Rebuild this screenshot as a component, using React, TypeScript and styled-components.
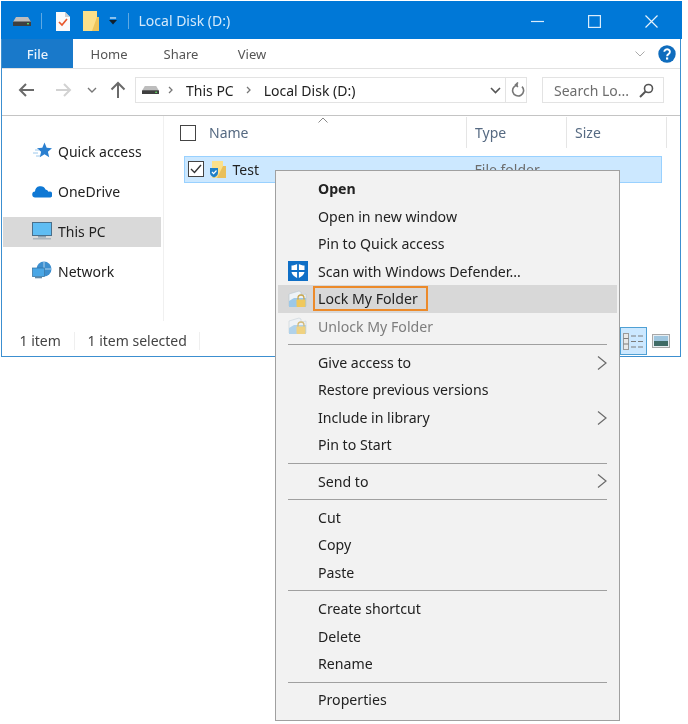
import React from "react";
import styled, { createGlobalStyle } from "styled-components";

const Global = createGlobalStyle`
  html, body { margin: 0; padding: 0; background: #fff; }
  body { font-family: "Noto Sans", "Open Sans", sans-serif; color: #1a1a1a; }
  * { box-sizing: border-box; }
`;

const Page = styled.div`
  position: relative;
  width: 688px;
  height: 724px;
  padding: 1px 0 0 1px;
  background: #fff;
  overflow: hidden;
  filter: blur(0.3px);
`;

const Window = styled.div`
  width: 680px;
  height: 356px;
  border: solid #3c8fd0;
  border-width: 0 1.5px 1.5px 1.5px;
  display: flex;
  flex-direction: column;
  background: #fff;
`;

const TitleBar = styled.div`
  flex: 0 0 38px;
  margin: 0 -1.5px;
  background: #0078d7;
  display: flex;
  align-items: center;
  padding: 2px 0 0 12px;
  color: #d4e9fa;
  font-size: 14px;
`;

const TitleSep = styled.span<{ $ml: number; $mr: number }>`
  width: 1px;
  height: 16px;
  background: #5ea9e3;
  margin: 0 ${(p) => p.$mr}px 0 ${(p) => p.$ml}px;
`;

const TitleText = styled.span`
  flex: 1;
  margin-top: -1px;
`;

const WinControls = styled.div`
  display: flex;
  align-items: center;
  gap: 44px;
  padding-right: 24px;
`;

const TabsRow = styled.div`
  flex: 0 0 30px;
  display: flex;
  align-items: stretch;
  border-bottom: 1px solid #e2e2e2;
  font-size: 13px;
  color: #555;
`;

const FileTab = styled.div`
  width: 71px;
  background: #1979ca;
  color: #e8f2fb;
  font-weight: 500;
  display: flex;
  align-items: center;
  justify-content: center;
`;

const Tab = styled.div<{ $w: number }>`
  width: ${(p) => p.$w}px;
  display: flex;
  align-items: center;
  justify-content: center;
`;

const TabsEnd = styled.div`
  margin-left: auto;
  display: flex;
  align-items: center;
  gap: 13px;
  padding-right: 4px;
`;

const AddressRow = styled.div`
  flex: 0 0 47px;
  display: flex;
  align-items: center;
  border-bottom: 1.5px solid #c4c4c4;
  padding: 0 0 4px 16px;
`;

const NavIcons = styled.div`
  display: flex;
  align-items: center;
  width: 117px;
`;

const AddressBox = styled.div`
  width: 392px;
  height: 26px;
  border: 1px solid #e3e3e3;
  display: flex;
  align-items: center;
  padding-left: 6px;
  font-size: 14px;
  color: #222;
`;

const Crumb = styled.span`
  margin: 0 12px 0 12px;
`;

const AddressEnd = styled.div`
  margin-left: auto;
  display: flex;
  align-items: center;
  height: 100%;
  gap: 4px;
  padding-right: 1px;
`;

const AddressDivider = styled.span`
  width: 1px;
  height: 100%;
  background: #e3e3e3;
  margin: 0 1px 0 0;
`;

const SearchBox = styled.div`
  width: 122px;
  height: 26px;
  border: 1px solid #e3e3e3;
  margin-left: 15px;
  display: flex;
  align-items: center;
  justify-content: space-between;
  padding: 0 9px 0 11px;
  font-size: 14px;
  color: #6d6d6d;
`;

const Body = styled.div`
  flex: 1;
  display: flex;
  min-height: 0;
`;

const Sidebar = styled.div`
  width: 162px;
  padding: 21px 0 0 1px;
  display: flex;
  flex-direction: column;
  gap: 10px;
  border-right: 1px solid #f0f0f0;
  margin-bottom: 5px;
`;

const NavItem = styled.div<{ $selected?: boolean }>`
  width: 158px;
  height: 30px;
  padding: 0 0 2px 29px;
  display: flex;
  align-items: center;
  gap: 6px;
  font-size: 14px;
  color: #222;
  background: ${(p) => (p.$selected ? "#d9d9d9" : "transparent")};
`;

const Files = styled.div`
  flex: 1;
  padding: 1px 0 0 16px;
`;

const HeaderRow = styled.div`
  position: relative;
  height: 31px;
  display: flex;
  align-items: center;
  font-size: 14px;
  color: #566a82;
`;

const SortCaret = styled.svg`
  position: absolute;
  left: 138px;
  top: 0;
`;

const Column = styled.div<{ $w: number; $pl: number; $line?: boolean }>`
  width: ${(p) => p.$w}px;
  height: 100%;
  padding-left: ${(p) => p.$pl}px;
  display: flex;
  align-items: center;
  gap: 13px;
  border-right: ${(p) => (p.$line ? "1px solid #e5e5e5" : "none")};
`;

const CheckBox = styled.span`
  width: 16px;
  height: 16px;
  border: 1.5px solid #444;
  background: #fff;
  display: inline-flex;
  align-items: center;
  justify-content: center;
  flex: none;
`;

const FileRow = styled.div`
  width: 478px;
  height: 27px;
  margin: 8px 0 0 3.5px;
  background: #cce8ff;
  border: 1px solid #99d1ff;
  display: flex;
  align-items: center;
  padding: 0 0 1px 3px;
  font-size: 14px;
  color: #222;
`;

const FileName = styled.span`
  width: 242px;
  margin-left: 7px;
`;

const FileType = styled.span`
  color: #6d6d6d;
`;

const StatusBar = styled.div`
  flex: 0 0 30px;
  display: flex;
  align-items: center;
  font-size: 14px;
  color: #444;
  padding-left: 17.5px;
`;

const StatusText = styled.span<{ $w: number }>`
  width: ${(p) => p.$w}px;
  height: 18px;
  line-height: 18px;
  border-right: 1px solid #efefef;
`;

const StatusItem = styled(StatusText)`
  margin-left: 13px;
`;

const ViewButtons = styled.div`
  margin-left: auto;
  display: flex;
  align-items: center;
  gap: 5px;
  padding-right: 10px;
  height: 100%;
`;

const DetailsButton = styled.div`
  width: 27px;
  height: 28px;
  background: #cce8ff;
  border: 1px solid #4fa0d4;
  display: flex;
  align-items: center;
  justify-content: center;
`;

const Menu = styled.div`
  position: absolute;
  left: 275px;
  top: 170px;
  width: 345px;
  height: 551px;
  background: #f2f2f2;
  border: 1px solid #a0a0a0;
  padding: 4.25px 2px 0 2px;
  font-size: 14.15px;
  color: #222;
`;

const MenuRow = styled.div<{ $active?: boolean; $disabled?: boolean; $bold?: boolean }>`
  height: 27.5px;
  display: flex;
  align-items: center;
  padding: 0 0 1px 40px;
  position: relative;
  background: ${(p) => (p.$active ? "#d8d8d8" : "transparent")};
  color: ${(p) => (p.$disabled ? "#7d7d7d" : "#222")};
  font-weight: ${(p) => (p.$bold ? 700 : 400)};
`;

const MenuIcon = styled.svg`
  position: absolute;
  left: 10px;
  top: 3.5px;
`;

const MenuArrow = styled.svg`
  position: absolute;
  right: 10px;
  top: 6.5px;
`;

const Highlight = styled.span`
  position: absolute;
  left: 35px;
  top: 1px;
  width: 115px;
  height: 25px;
  border: 2.5px solid #ec8a2a;
`;

const Separator = styled.div`
  height: 1px;
  margin: 3.9px 10px;
  background: #a0a0a0;
`;

const Drive = ({ w = 18 }: { w?: number }) => (
  <svg width={w} height={(w * 9) / 18} viewBox="0 0 18 9">
    <path d="M3 0h12l3 5H0z" fill="#bdbdbd" />
    <rect x="0" y="4.5" width="18" height="4.5" rx="0.6" fill="#3f3f3f" />
    <rect x="14" y="6" width="2" height="1.4" fill="#5fd35f" />
  </svg>
);

const LockFolder = ({ dim }: { dim?: boolean }) => (
  <MenuIcon width="20" height="20" viewBox="0 0 20 20" opacity={dim ? 0.75 : 1}>
    <path d="M1 5l10-3 2 1v3l5-1v12H1z" fill="#eef3f7" stroke="#b9c6cf" strokeWidth="0.6" />
    <path d="M1 12l5-3h12v9H1z" fill="#9cc8e8" />
    <path d="M10 11V9a3 3 0 0 1 6 0v2" fill="none" stroke="#c9a74e" strokeWidth="1.3" />
    <rect x="8.5" y="10.5" width="9" height="7.5" rx="0.8" fill="#f0c85c" />
  </MenuIcon>
);

const Arrow = ({ d, color }: { d: string; color: string }) => (
  <svg width="18" height="16" viewBox="0 0 18 16" fill="none" stroke={color} strokeWidth="2">
    <path d={d} />
  </svg>
);

const Chevron = () => (
  <MenuArrow width="10" height="14" viewBox="0 0 10 14" fill="none" stroke="#6a6a6a" strokeWidth="1.2">
    <path d="M1 0.5L9 7 1 13.5" />
  </MenuArrow>
);

type Item = { label: string; bold?: boolean; sub?: boolean };
const Group = ({ items }: { items: Item[] }) => (
  <>
    {items.map((i) => (
      <MenuRow key={i.label} $bold={i.bold}>
        {i.label}
        {i.sub && <Chevron />}
      </MenuRow>
    ))}
  </>
);

export default function App() {
  return (
    <Page>
      <Global />
      <Window>
        <TitleBar>
          <Drive />
          <TitleSep $ml={10} $mr={14} />
          <svg width="14" height="19" viewBox="0 0 14 19">
            <path d="M0 0h9l5 5v14H0z" fill="#fafafa" />
            <path d="M9 0l5 5H9z" fill="#cfcfcf" />
            <path d="M3 10l3 3 5-6" fill="none" stroke="#e8562a" strokeWidth="1.7" />
          </svg>
          <svg width="16" height="20" viewBox="0 0 16 20" style={{ marginLeft: 13 }}>
            <rect width="14" height="20" fill="#fbe08a" />
            <path d="M14 6h2v14H9z" fill="#eec45a" />
          </svg>
          <svg width="8" height="8" viewBox="0 0 9 8" style={{ marginLeft: 10 }}>
            <rect x="1" y="0" width="7" height="1.2" fill="#fff" />
            <path d="M0 3h9L4.500 8z" fill="#10202e" />
          </svg>
          <TitleSep $ml={11} $mr={10} />
          <TitleText>Local Disk (D:)</TitleText>
          <WinControls>
            <svg width="13" height="13" viewBox="0 0 13 13" stroke="#d9ecfb" strokeWidth="1.2">
              <path d="M0 6.500h13" />
            </svg>
            <svg width="13" height="13" viewBox="0 0 13 13" fill="none" stroke="#d9ecfb" strokeWidth="1.2">
              <rect x="0.600" y="0.600" width="11.800" height="11.800" />
            </svg>
            <svg width="13" height="13" viewBox="0 0 13 13" fill="none" stroke="#e6f2fc" strokeWidth="1.2">
              <path d="M0.500 0.500l12 12M12.500 0.500l-12 12" />
            </svg>
          </WinControls>
        </TitleBar>
        <TabsRow>
          <FileTab>File</FileTab>
          <Tab $w={72}>Home</Tab>
          <Tab $w={72}>Share</Tab>
          <Tab $w={70}>View</Tab>
          <TabsEnd>
            <svg width="10" height="6" viewBox="0 0 10 6" fill="none" stroke="#aaa" strokeWidth="1">
              <path d="M0.500 0.500L5 5l4.500-4.500" />
            </svg>
            <svg width="18" height="18" viewBox="0 0 18 18">
              <circle cx="9" cy="9" r="8.700" fill="#0f6cbd" />
              <path d="M6.300 6.800a2.800 2.600 0 1 1 4.200 2.300c-1 .6-1.400 1-1.400 2.200" fill="none" stroke="#fff" strokeWidth="1.900" />
              <rect x="8" y="12.400" width="2.200" height="2.200" fill="#fff" />
            </svg>
          </TabsEnd>
        </TabsRow>
        <AddressRow>
          <NavIcons>
            <Arrow d="M16 8H2M8 2L2 8l6 6" color="#6a6a6a" />
            <span style={{ width: 19 }} />
            <Arrow d="M1 8h14M9 2l6 6-6 6" color="#d2d2d2" />
            <svg width="10" height="6" viewBox="0 0 10 6" fill="none" stroke="#777" strokeWidth="1.400" style={{ marginLeft: 14 }}>
              <path d="M1 1l4 4 4-4" />
            </svg>
            <svg width="16" height="18" viewBox="0 0 16 18" fill="none" stroke="#6a6a6a" strokeWidth="2" style={{ marginLeft: 13 }}>
              <path d="M8 17V2M1.500 8.500L8 2l6.500 6.500" />
            </svg>
          </NavIcons>
          <AddressBox>
            <Drive w={17} />
            <svg width="6" height="8" viewBox="0 0 6 8" fill="none" stroke="#777" strokeWidth="1.300" style={{ marginLeft: 9 }}>
              <path d="M1 1l3 3-3 3" />
            </svg>
            <Crumb>This PC</Crumb>
            <svg width="6" height="8" viewBox="0 0 6 8" fill="none" stroke="#777" strokeWidth="1.300">
              <path d="M1 1l3 3-3 3" />
            </svg>
            <Crumb>Local Disk (D:)</Crumb>
            <AddressEnd>
              <svg width="11" height="7" viewBox="0 0 11 7" fill="none" stroke="#555" strokeWidth="1.600">
                <path d="M1 1l4.500 4.500L10 1" />
              </svg>
              <AddressDivider />
              <svg width="14" height="16" viewBox="0 0 14 16" fill="none" stroke="#777" strokeWidth="1.600">
                <path d="M11 4.600A5.500 5.500 0 1 1 7 3H4.500M7 0.500L4.500 3 7 5" />
              </svg>
            </AddressEnd>
          </AddressBox>
          <SearchBox>
            Search Lo...
            <svg width="15" height="15" viewBox="0 0 15 15" fill="none" stroke="#555" strokeWidth="1.600">
              <circle cx="9.500" cy="5.500" r="4" />
              <path d="M6.500 8.500L1 14" strokeWidth="2" />
            </svg>
          </SearchBox>
        </AddressRow>
        <Body>
          <Sidebar>
            <NavItem>
              <svg width="20" height="18" viewBox="0 0 20 18">
                <path d="M12.500 0.500l2.200 5.300 5.300.4-4.100 3.500 1.300 5.600-4.700-3-4.700 3 1.300-5.600-4.100-3.500 5.300-.4z" fill="#2a7fd0" />
                <path d="M1 11h5M3 8h4M4 14h4" stroke="#9cc8ec" strokeWidth="1" />
              </svg>
              Quick access
            </NavItem>
            <NavItem>
              <svg width="20" height="14" viewBox="0 0 20 14">
                <path d="M3.500 13.500a3 3 0 0 1-.5-6 5.500 5.500 0 0 1 10.500-2 4 4 0 0 1 3 2.300 3 3 0 0 1 2 5.700z" fill="#0f78d4" />
              </svg>
              OneDrive
            </NavItem>
            <NavItem $selected>
              <svg width="20" height="18" viewBox="0 0 20 18">
                <rect x="0.500" y="0.500" width="19" height="13" fill="#5fbdf3" stroke="#4a6f8a" />
                <rect x="6" y="14" width="8" height="1.500" fill="#8aa0b0" />
                <rect x="1" y="16" width="18" height="1.500" fill="#a9b4bc" />
              </svg>
              This PC
            </NavItem>
            <NavItem>
              <svg width="20" height="20" viewBox="0 0 20 20">
                <circle cx="12" cy="8" r="7.500" fill="#3d8fcf" />
                <path d="M12 .5v15M4.500 8h15" stroke="#cfe6f6" strokeWidth="0.800" />
                <rect x="0.500" y="7" width="12" height="8.500" fill="#4aa7e6" stroke="#2f6e9e" strokeWidth="0.700" />
                <rect x="3" y="16" width="7" height="1.300" fill="#5f89a8" />
              </svg>
              Network
            </NavItem>
          </Sidebar>
          <Files>
            <HeaderRow>
              <SortCaret width="10" height="6" viewBox="0 0 10 6" fill="none" stroke="#888" strokeWidth="1">
                <path d="M0.500 5.500L5 1l4.500 4.500" />
              </SortCaret>
              <Column $w={287} $pl={0} $line>
                <CheckBox />
                Name
              </Column>
              <Column $w={100} $pl={8} $line>Type</Column>
              <Column $w={100} $pl={8} $line>Size</Column>
            </HeaderRow>
            <FileRow>
              <CheckBox>
                <svg width="12" height="10" viewBox="0 0 12 10" fill="none" stroke="#333" strokeWidth="1.400">
                  <path d="M1 5l3.500 3.500L11 1" />
                </svg>
              </CheckBox>
              <svg width="17" height="17" viewBox="0 0 17 17" style={{ marginLeft: 5 }}>
                <rect x="3" y="0" width="11" height="17" fill="#fbe08a" />
                <path d="M14 5h3v12H8z" fill="#e9bf5a" />
                <path d="M1 7h8v5c0 2-2 3.500-4 4.500-2-1-4-2.500-4-4.500z" fill="#1f80c8" />
                <path d="M3 11l1.600 1.600L7.500 9.500" stroke="#fff" strokeWidth="1.200" fill="none" />
              </svg>
              <FileName>Test</FileName>
              <FileType>File folder</FileType>
            </FileRow>
          </Files>
        </Body>
        <StatusBar>
          <StatusText $w={55}>1 item</StatusText>
          <StatusItem $w={112}>1 item selected</StatusItem>
          <ViewButtons>
            <DetailsButton>
              <svg width="21" height="17" viewBox="0 0 21 17" fill="none">
                <rect x="0.500" y="0.500" width="5" height="16" fill="#e8e8e8" stroke="#9a9a9a" />
                <path d="M0.500 5.500h5M0.500 11h5M8 3h5M15 3h5M8 8.500h5M15 8.500h5M8 14h5M15 14h5" stroke="#7d7d7d" />
              </svg>
            </DetailsButton>
            <svg width="18" height="14" viewBox="0 0 18 14">
              <rect x="0.500" y="0.500" width="17" height="13" fill="#e8eef2" stroke="#a8a8a8" />
              <rect x="2" y="2" width="14" height="5" fill="#9fc6df" />
              <rect x="2" y="7" width="14" height="5" fill="#3f6b66" />
            </svg>
          </ViewButtons>
        </StatusBar>
      </Window>
      <Menu>
        <Group items={[{ label: "Open", bold: true }, { label: "Open in new window" }, { label: "Pin to Quick access" }]} />
        <MenuRow>
          <MenuIcon width="20" height="20" viewBox="0 0 20 20">
            <rect width="20" height="20" fill="#0f6fc6" />
            <path d="M10 2.500c2.500 1.500 4.500 2 6.500 2v6c0 3-3 5-6.500 7-3.500-2-6.500-4-6.500-7v-6c2 0 4-.5 6.500-2z" fill="#fff" />
            <path d="M10 2v16M3 10h14" stroke="#0f6fc6" strokeWidth="1.800" />
          </MenuIcon>
          Scan with Windows Defender...
        </MenuRow>
        <MenuRow $active>
          <LockFolder />
          Lock My Folder
          <Highlight />
        </MenuRow>
        <MenuRow $disabled>
          <LockFolder dim />
          Unlock My Folder
        </MenuRow>
        <Separator />
        <Group items={[{ label: "Give access to", sub: true }, { label: "Restore previous versions" }, { label: "Include in library", sub: true }, { label: "Pin to Start" }]} />
        <Separator />
        <Group items={[{ label: "Send to", sub: true }]} />
        <Separator />
        <Group items={[{ label: "Cut" }, { label: "Copy" }, { label: "Paste" }]} />
        <Separator />
        <Group items={[{ label: "Create shortcut" }, { label: "Delete" }, { label: "Rename" }]} />
        <Separator />
        <Group items={[{ label: "Properties" }]} />
      </Menu>
    </Page>
  );
}
